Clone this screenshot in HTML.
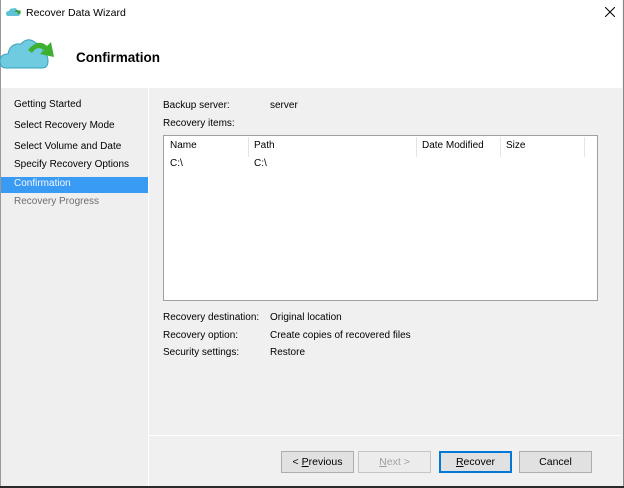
<!DOCTYPE html>
<html><head><style>
body{margin:0;width:624px;height:488px;overflow:hidden;background:#2a2a2a;font-family:"Liberation Sans",sans-serif;font-size:10px;color:#000;position:relative}
.a{position:absolute}
.win{left:0;top:0;width:622px;height:486px;background:#f0f0f0;border-right:1px solid #888;border-left:1px solid #999}
.btn{position:absolute;top:451px;width:71px;height:20px;border:1px solid #adadad;background:#e1e1e1;text-align:center;line-height:20px;font-size:10.5px}
.t{position:absolute;white-space:nowrap}
</style></head><body>
<div class="a win"></div>
<div class="a" style="left:1px;top:0;width:621px;height:88px;background:#fff"></div>
<svg class="a" style="left:6px;top:7px" width="16" height="10" viewBox="0 0 16 10"><path d="M2 9 Q0 9 0 6.5 Q0 4 3 4 Q4 1 7 1.5 Q10 0 11 3 Q14 3 14 6 Q14 9 12 9Z" fill="#5fc2d6"/><path d="M9 4 Q11 2 13 4 L14.5 3 L14.5 7 L11 6.5 L12 5.5 Q11 4.5 9 5Z" fill="#3a9a2a"/></svg>
<div class="t" style="left:26px;top:7px;font-size:10.5px">Recover Data Wizard</div>
<svg class="a" style="left:605px;top:7px" width="10" height="10"><path d="M0 0L10 10M10 0L0 10" stroke="#000" stroke-width="1"/></svg>
<svg class="a" style="left:0;top:34px" width="56" height="36" viewBox="0 0 56 36"><path d="M6 34 Q0 34 0 27 Q0 20 8 20 Q10 9 21 10 Q28 2 36 9 Q43 10 43 19 Q48 20 48 27 Q48 34 42 34Z" fill="#6ecbe0" stroke="#3aa0bb" stroke-width="1"/><path d="M28 16 Q38 4 47 12 L51 8 L54 23 L40 20 L44 16 Q37 11 32 19Z" fill="#3db02f"/></svg>
<div class="t" style="left:76px;top:50px;font-size:13.5px;font-weight:bold">Confirmation</div>
<div class="a" style="left:1px;top:88px;width:147px;height:398px;background:#efefef"></div>
<div class="a" style="left:148px;top:88px;width:1px;height:398px;background:#fff"></div>
<div class="a" style="left:149px;top:435px;width:472px;height:1px;background:#fff"></div>
<div class="t" style="left:14px;top:99px">Getting Started</div>
<div class="t" style="left:14px;top:120px">Select Recovery Mode</div>
<div class="t" style="left:14px;top:141px">Select Volume and Date</div>
<div class="t" style="left:14px;top:159px">Specify Recovery Options</div>
<div class="a" style="left:1px;top:177px;width:147px;height:16px;background:#3a9bf5"></div>
<div class="t" style="left:14px;top:178px;color:#f4f8ff">Confirmation</div>
<div class="t" style="left:14px;top:196px;color:#6d6d6d">Recovery Progress</div>
<div class="t" style="left:163px;top:100px">Backup server:</div>
<div class="t" style="left:270px;top:100px">server</div>
<div class="t" style="left:163px;top:118px">Recovery items:</div>
<div class="a" style="left:163px;top:135px;width:433px;height:164px;background:#fff;border:1px solid #a0a0a0"></div>
<div class="a" style="left:248px;top:137px;width:1px;height:20px;background:#e5e5e5"></div>
<div class="a" style="left:416px;top:137px;width:1px;height:20px;background:#e5e5e5"></div>
<div class="a" style="left:500px;top:137px;width:1px;height:20px;background:#e5e5e5"></div>
<div class="a" style="left:584px;top:137px;width:1px;height:20px;background:#e5e5e5"></div>
<div class="t" style="left:170px;top:140px">Name</div>
<div class="t" style="left:254px;top:140px">Path</div>
<div class="t" style="left:422px;top:140px">Date Modified</div>
<div class="t" style="left:506px;top:140px">Size</div>
<div class="t" style="left:170px;top:158px">C:\</div>
<div class="t" style="left:254px;top:158px">C:\</div>
<div class="t" style="left:163px;top:312px">Recovery destination:</div>
<div class="t" style="left:270px;top:312px">Original location</div>
<div class="t" style="left:163px;top:330px">Recovery option:</div>
<div class="t" style="left:270px;top:330px">Create copies of recovered files</div>
<div class="t" style="left:163px;top:347px">Security settings:</div>
<div class="t" style="left:270px;top:347px">Restore</div>
<div class="btn" style="left:281px">&lt; <u>P</u>revious</div>
<div class="btn" style="left:358px;color:#a0a0a0;border-color:#c5c5c5;background:#ececec"><u>N</u>ext &gt;</div>
<div class="btn" style="left:439px;border-color:#0078d7;box-shadow:inset 0 0 0 1px #0078d7"><u>R</u>ecover</div>
<div class="btn" style="left:519px">Cancel</div>
</body></html>
